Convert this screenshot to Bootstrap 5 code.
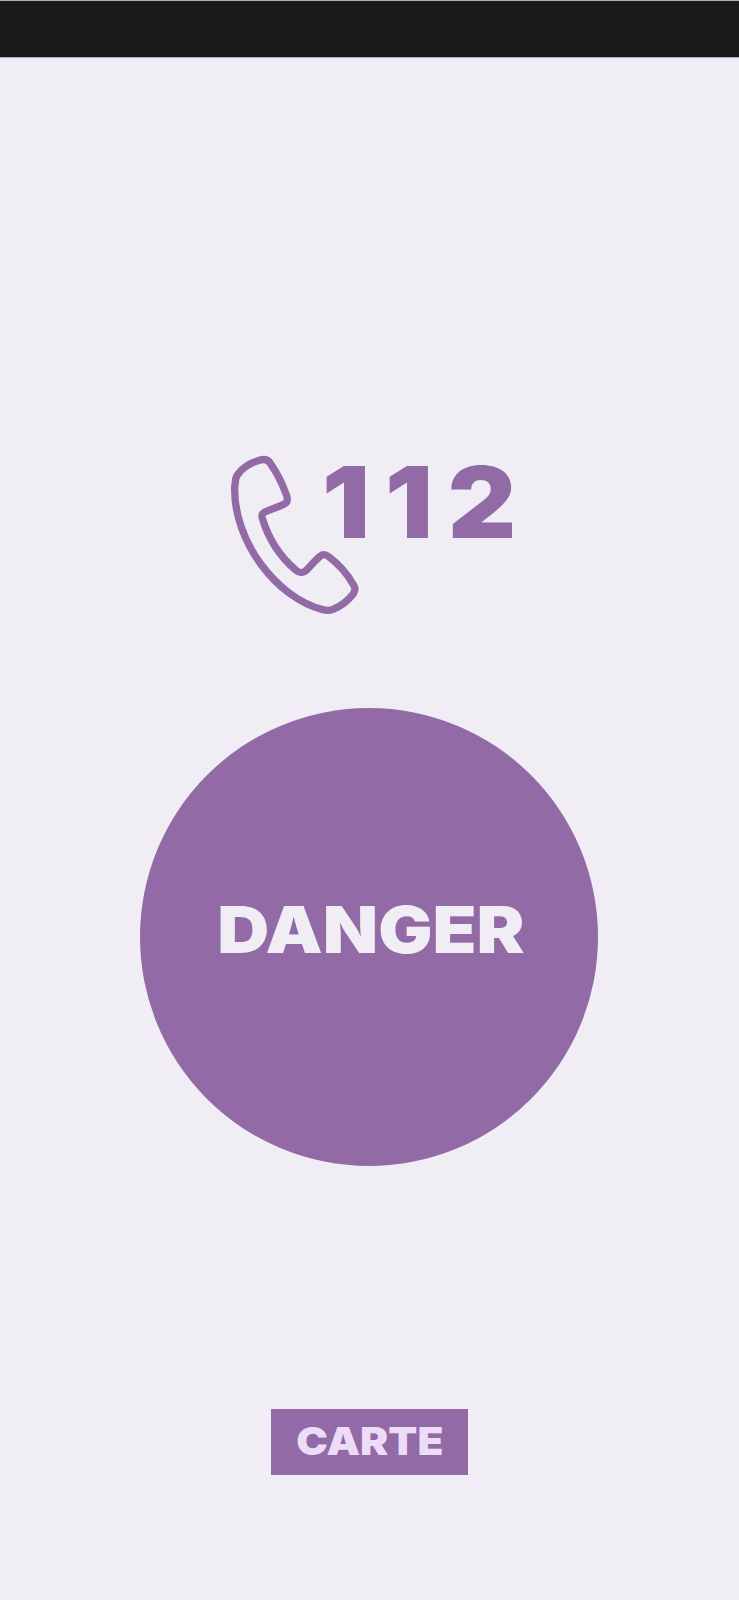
<!DOCTYPE html>
<html lang="ro">
<head>
<meta charset="utf-8">
<meta name="viewport" content="width=device-width, initial-scale=1">
<title>112</title>
<link href="https://cdn.jsdelivr.net/npm/bootstrap@5.3.0/dist/css/bootstrap.min.css" rel="stylesheet">
<style>
:root { --plum: #926ba6; --mist: #f0edf5; }
body { background: var(--mist); font-family: "Arial Black", Inter, sans-serif; font-weight: 900; }
.screen { height: 1600px; }
.status-strip { height: 58px; background: #1b1b1b; border-top: 1px solid #aeb3b1; border-bottom: 1px solid #b5a9b8; }
.emergency { margin: 387px 0 0 220px; height: 180px; color: var(--plum); }
.emergency:hover { color: var(--plum); }
.number { font-size: 99px; line-height: 72px; margin: 21px 0 0 -48px; letter-spacing: 14px; transform: scaleX(1.07); transform-origin: left; }
.danger-btn { width: 458px; height: 458px; margin: 83px 0 0 140px; padding: 0 0 15px 4px; background: var(--plum); color: var(--mist); font-size: 65px; line-height: 1; font-weight: 900; }
.map-btn { width: 197px; height: 66px; margin: 243px 0 0 271px; background: var(--plum); color: #ecdcf8; font-size: 39px; line-height: 1; font-weight: 900; }
.danger-btn span { transform: scaleX(1.107); }
.map-btn span { transform: scaleX(1.085); padding-bottom: 4px; }
</style>
</head>
<body>
<main class="screen d-flex flex-column align-items-start overflow-hidden">
  <div class="status-strip w-100 flex-shrink-0"></div>
  <a href="tel:112" class="emergency d-flex align-items-start text-decoration-none flex-shrink-0">
    <svg width="150" height="180" viewBox="0 0 450 540" fill="none" stroke="currentColor" stroke-width="22" stroke-linejoin="round" aria-hidden="true">
      <path d="M46 112C46 100 49 93 55 86C72 64 95 51 126 44C138 42 145 46 151 55C172 85 186 112 200 152C204 166 202 173 193 177C175 187 155 191 137 200C126 205 124 210 127 220C145 280 180 335 228 376C240 385 249 385 259 376C273 362 285 346 300 334C310 326 317 328 326 335C357 358 383 388 402 422C407 431 406 437 400 446C384 467 363 483 339 493C329 497 320 497 308 494C170 458 40 290 44 125Z"/>
    </svg>
    <span class="number">112</span>
  </a>
  <button type="button" class="danger-btn btn rounded-circle border-0 d-flex align-items-center justify-content-center flex-shrink-0"><span>DANGER</span></button>
  <button type="button" class="map-btn btn rounded-0 border-0 p-0 d-flex align-items-center justify-content-center flex-shrink-0"><span>CARTE</span></button>
</main>
<script src="https://cdn.jsdelivr.net/npm/bootstrap@5.3.0/dist/js/bootstrap.bundle.min.js"></script>
</body>
</html>
